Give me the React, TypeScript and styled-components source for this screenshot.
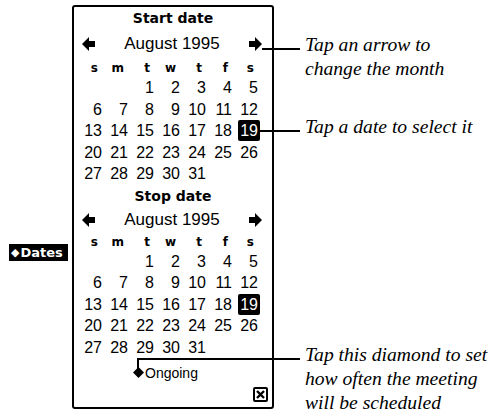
import styled, { createGlobalStyle } from "styled-components";

const GlobalStyle = createGlobalStyle`
  html, body {
    margin: 0;
    padding: 0;
    background: #fff;
  }
  body {
    width: 491px;
    height: 417px;
    overflow: hidden;
    font-family: "DejaVu Sans", sans-serif;
    color: #000;
  }
`;

const weekDays = ["s", "m", "t", "w", "t", "f", "s"];
// August 1995 starts on a Tuesday
const days: (number | null)[] = [null, null, ...Array.from({ length: 31 }, (_, i) => i + 1)];

const LeftArrow = () => (
  <svg width="14" height="14" viewBox="0 0 14 14">
    <polygon points="0,7 7,0 7,4 13,4 13,10 7,10 7,14" fill="#000" />
  </svg>
);

const RightArrow = () => (
  <svg width="14" height="14" viewBox="0 0 14 14">
    <polygon points="14,7 7,0 7,4 1,4 1,10 7,10 7,14" fill="#000" />
  </svg>
);

const Calendar = ({
  title,
  selected,
  monthHeight,
}: {
  title: string;
  selected: number;
  monthHeight: number;
}) => {
  return (
    <Section>
      <Title>{title}</Title>
      <MonthRow $height={monthHeight}>
        <LeftArrow />
        <MonthName>August 1995</MonthName>
        <RightArrow />
      </MonthRow>
      <Grid>
        {weekDays.map((d, i) => (
          <WeekDay key={"h" + i}>{d}</WeekDay>
        ))}
        {days.map((d, i) => (
          <DayCell key={"d" + i}>
            {d ? <DayNum $selected={d === selected}>{d}</DayNum> : null}
          </DayCell>
        ))}
      </Grid>
    </Section>
  );
};

const App: React.FC = () => {
  return (
    <>
      <GlobalStyle />
      <Page>
        <TabColumn>
          <Tab>
            <span>◆</span>Dates
          </Tab>
        </TabColumn>
        <Panel>
          <Calendar title="Start date" selected={19} monthHeight={30} />
          <Calendar title="Stop date" selected={19} monthHeight={26} />
          <OngoingRow>
            <svg width="11" height="11" viewBox="0 0 11 11">
              <polygon points="5.5,0 11,5.5 5.5,11 0,5.5" fill="#000" />
            </svg>
            <span>Ongoing</span>
          </OngoingRow>
          <CloseRow>
            <CloseBox>
              <svg width="11" height="11" viewBox="0 0 11 11">
                <path d="M2 2 L9 9 M9 2 L2 9" stroke="#000" strokeWidth="2.4" />
              </svg>
            </CloseBox>
          </CloseRow>
        </Panel>
        <Notes>
          <Note $gap={0} $lead={12}>
            Tap an arrow to
            <br />
            change the month
          </Note>
          <Note $gap={34} $lead={15}>
            Tap a date to select it
          </Note>
          <Note $gap={204} $lead={137} $tick>
            Tap this diamond to set
            <br />
            how often the meeting
            <br />
            will be scheduled
          </Note>
        </Notes>
      </Page>
    </>
  );
};

const Page = styled.div({
  display: "flex",
  alignItems: "flex-start",
  width: "491px",
  height: "417px",
});

const TabColumn = styled.div({
  width: "72px",
  flexShrink: 0,
  boxSizing: "border-box",
  paddingTop: "244px",
  paddingRight: "4px",
  display: "flex",
  justifyContent: "flex-end",
});

const Tab = styled.div({
  width: "59px",
  height: "17px",
  background: "#000",
  color: "#fff",
  font: 'bold 13px/17px "DejaVu Sans", sans-serif',
  display: "flex",
  alignItems: "center",
  paddingLeft: "2px",
  boxSizing: "border-box",
  span: {
    fontSize: "11px",
    marginRight: "1px",
  },
});

const Panel = styled.div({
  flexShrink: 0,
  marginTop: "5px",
  width: "202px",
  height: "404px",
  boxSizing: "border-box",
  border: "2px solid #000",
  borderRadius: "3px",
  display: "flex",
  flexDirection: "column",
});

const Section = styled.div({
  display: "flex",
  flexDirection: "column",
});

const Title = styled.div({
  height: "22px",
  font: 'bold 14px/22px "DejaVu Sans", sans-serif',
  textAlign: "center",
});

const MonthRow = styled.div<{ $height: number }>`
  height: ${(p) => p.$height}px;
  display: flex;
  align-items: center;
  padding: 0 10px 0 8px;
`;

const MonthName = styled.div({
  flex: 1,
  textAlign: "center",
  font: '17px "Liberation Sans", sans-serif',
});

const Grid = styled.div({
  display: "grid",
  gridTemplateColumns: "repeat(7, 26px)",
  gridAutoRows: "21.5px",
  gridTemplateRows: "18px",
  paddingLeft: "4px",
});

const WeekDay = styled.div({
  font: 'bold 12px/18px "DejaVu Sans", sans-serif',
  textAlign: "right",
  paddingRight: "6px",
});

const DayCell = styled.div({
  display: "flex",
  alignItems: "center",
  justifyContent: "flex-end",
});

const DayNum = styled.span<{ $selected?: boolean }>`
  padding: 0 2px;
  font: 16px/21px "Liberation Sans", sans-serif;
  border-radius: 2px;
  background: ${(p) => (p.$selected ? "#000" : "transparent")};
  color: ${(p) => (p.$selected ? "#fff" : "#000")};
`;

const OngoingRow = styled.div({
  height: "29px",
  display: "flex",
  alignItems: "center",
  paddingLeft: "59px",
  gap: "1px",
  font: '14px "Liberation Sans", sans-serif',
});

const CloseRow = styled.div({
  display: "flex",
  justifyContent: "flex-end",
  paddingRight: "4px",
});

const CloseBox = styled.div({
  width: "15px",
  height: "15px",
  boxSizing: "border-box",
  border: "2px solid #000",
  borderRadius: "2px",
  display: "flex",
  alignItems: "center",
  justifyContent: "center",
});

const Notes = styled.div({
  flex: 1,
  display: "flex",
  flexDirection: "column",
  paddingTop: "33px",
});

const Note = styled.p<{ $gap: number; $lead: number; $tick?: boolean }>`
  position: relative;
  margin: ${(p) => p.$gap}px 0 0;
  padding-left: 31px;
  white-space: nowrap;
  font: italic 19.6px/24px "Liberation Serif", serif;
  &::before {
    content: "";
    position: absolute;
    top: 15px;
    left: ${(p) => -p.$lead}px;
    width: ${(p) => p.$lead + 26}px;
    height: 2px;
    background: #000;
  }
  &::after {
    content: "";
    display: ${(p) => (p.$tick ? "block" : "none")};
    position: absolute;
    top: 15px;
    left: ${(p) => -p.$lead}px;
    width: 2px;
    height: 11px;
    background: #000;
  }
`;

export default App;
